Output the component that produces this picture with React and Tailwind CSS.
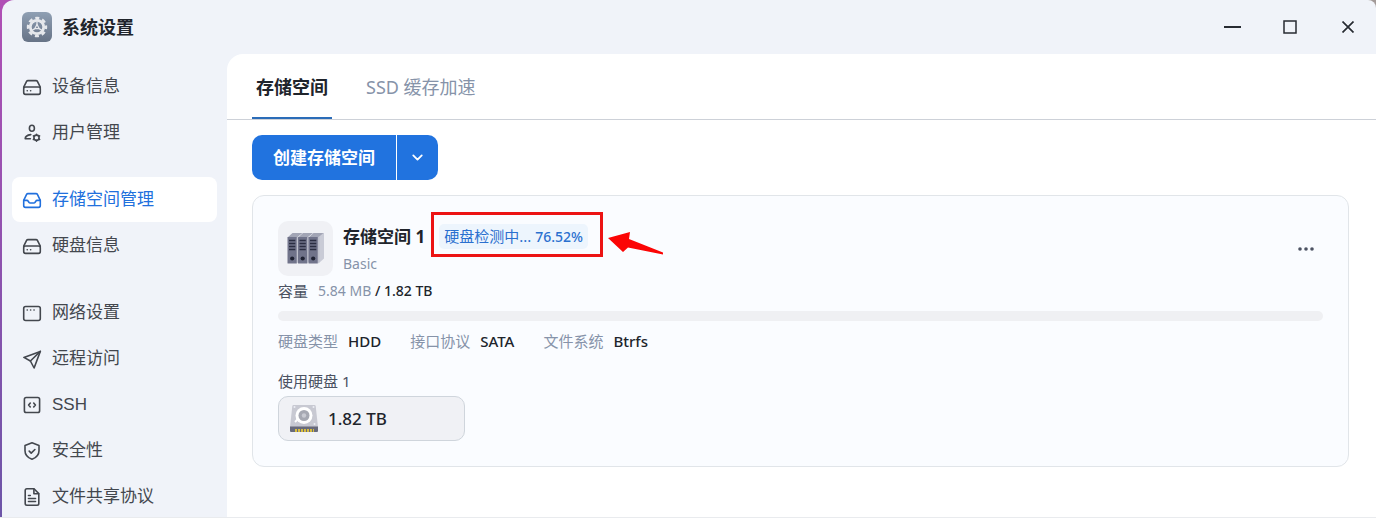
import React from 'react';
import { ChevronDown } from 'lucide-react';

const iconProps = {
  width: 20,
  height: 20,
  viewBox: '0 0 20 20',
  fill: 'none',
  stroke: 'currentColor',
  strokeWidth: 1.6,
  strokeLinecap: 'round',
  strokeLinejoin: 'round',
  'aria-hidden': true,
};

const DriveIcon = () => (
  <svg {...iconProps}>
    <path d="M1.7 10.2 4.6 4.4Q5 3.6 6 3.6h8q1 0 1.4.8l2.9 5.8" />
    <rect x="1.7" y="10" width="16.6" height="7.4" rx="1.8" />
    <path d="M5.2 13.8h.1M8.6 13.8h.1" />
  </svg>
);

const StorageIcon = () => (
  <svg {...iconProps}>
    <path d="M1.7 10.4 4.6 4.4Q5 3.6 6 3.6h8q1 0 1.4.8l2.9 6v5.2q0 1.8-1.8 1.8h-13q-1.8 0-1.8-1.8z" />
    <path d="M1.7 10.4h3.2q.9 0 1.3.8l.7 1.1q.4.7 1.3.7h3.6q.9 0 1.3-.7l.7-1.1q.4-.8 1.3-.8h3.2" />
  </svg>
);

const UserIcon = () => (
  <svg {...iconProps}>
    <ellipse cx="9.9" cy="5.2" rx="2.5" ry="3" />
    <path d="M8.8 11.6c-3.2.4-5.6 2-5.6 4.2h5.2" />
    <circle cx="14.5" cy="14.7" r="2.6" />
    <path d="M14.5 11.2v.8M14.5 17.4v.8M11.4 12.9l.8.5M16.8 16l.8.5M11.4 16.5l.8-.5M16.8 13.4l.8-.5" />
  </svg>
);

const NetworkIcon = () => (
  <svg {...iconProps}>
    <rect x="1.7" y="3.5" width="16.6" height="14" rx="2" />
    <path d="M5.2 7h.1M8.6 7h.1M12 7h.1" />
  </svg>
);

const RemoteIcon = () => (
  <svg {...iconProps}>
    <path d="M18.3 2.4 1.9 8.4l6.5 3.6 3.7 7z" />
    <path d="M18.3 2.4 8.4 12" />
  </svg>
);

const SshIcon = () => (
  <svg {...iconProps}>
    <rect x="2.4" y="2.5" width="15.2" height="15" rx="1.8" />
    <path d="M8.3 8 6.6 10l1.7 2M11.7 8l1.7 2-1.7 2" />
  </svg>
);

const ShieldIcon = () => (
  <svg {...iconProps}>
    <path d="M10 1.8 17 4.4v5.3c0 4.3-2.7 6.9-7 8.6-4.3-1.7-7-4.3-7-8.6V4.4z" />
    <path d="m7.2 10.1 2 2 3.7-3.6" />
  </svg>
);

const FileIcon = () => (
  <svg {...iconProps}>
    <path d="M12 1.8H4.9Q3.2 1.8 3.2 3.5v13q0 1.7 1.7 1.7h10.2q1.7 0 1.7-1.7V6.6z" />
    <path d="M11.9 2v4.7h4.7M6.5 8.5h1.8M6.5 11.5h7M6.5 14.5h7" />
  </svg>
);

const AppIcon = () => (
  <svg width="30" height="30" viewBox="0 0 30 30" aria-hidden="true">
    <defs>
      <linearGradient id="app-bg" x1="0" y1="0" x2="0" y2="1">
        <stop offset="0" stopColor="#8f9fb3" />
        <stop offset="1" stopColor="#677386" />
      </linearGradient>
    </defs>
    <rect width="30" height="30" rx="6" fill="url(#app-bg)" />
    <g stroke="#e6e8ec" fill="none">
      <circle cx="15" cy="15" r="6.7" strokeWidth="2.8" />
      <circle cx="15" cy="15" r="8.9" strokeWidth="2.6" strokeDasharray="4 2.99" strokeDashoffset="2" />
      <path d="M15 9.5V13M10.2 18.2l2.6-1.6M19.8 18.2l-2.6-1.6" strokeWidth="1.3" />
      <path d="m15 12.5 2.3 4.2h-4.6z" strokeWidth="1.3" strokeLinejoin="round" />
    </g>
  </svg>
);

const PoolIcon = () => (
  <svg width="38" height="34" viewBox="0 0 38 34" aria-hidden="true">
    <path d="M30 5.5 34 1h3v25.5l-5.5 5z" fill="#c9cbd6" />
    {[0.5, 11, 21.5].map((x) => (
      <g key={x} transform={`translate(${x} 0)`}>
        <path d="M0 5.5 5 1h10l-5.5 4.5z" fill="#a2a5b5" />
        <path d="M9.3 5.5 11 4v26l-1.7 1.5z" fill="#bfc1cd" />
        <rect y="5" width="9.3" height="26.5" rx=".5" fill="#70738a" />
        <path d="M1.5 8.5h6.3M1.5 11.5h6.3M1.5 14.5h6.3M1.5 17.5h6.3" stroke="#2b2e42" strokeWidth="1.3" />
        <circle cx="4.7" cy="26.5" r="2.1" fill="#1f2233" />
      </g>
    ))}
  </svg>
);

const DiskIcon = () => (
  <svg width="28" height="28" viewBox="0 0 28 28" aria-hidden="true">
    <path d="M3.5 0h21q1 0 1.2 1L28 22H0L2.3 1Q2.5 0 3.5 0z" fill="#c8c9d2" />
    <path d="M0 21.5h28V26q0 1-1 1H1q-1 0-1-1z" fill="#686a7b" />
    <path d="M5 25.5h19" stroke="#d8bd3e" strokeWidth="3" strokeDasharray="2 1" />
    <circle cx="14" cy="10.5" r="8.5" fill="#fff" />
    <circle cx="14" cy="10.5" r="5.5" fill="#a6a8b2" />
    <circle cx="14" cy="10.5" r="2.2" fill="#c9cad2" />
    <path d="m5 17 3-3" stroke="#fff" strokeWidth="2" />
    <g fill="#eceef3">
      <circle cx="4.5" cy="2" r="1" />
      <circle cx="23.5" cy="2" r="1" />
      <circle cx="24.5" cy="19" r="1" />
    </g>
  </svg>
);

const groups = [
  [
    { label: '设备信息', Icon: DriveIcon },
    { label: '用户管理', Icon: UserIcon },
  ],
  [
    { label: '存储空间管理', Icon: StorageIcon, active: true },
    { label: '硬盘信息', Icon: DriveIcon },
  ],
  [
    { label: '网络设置', Icon: NetworkIcon },
    { label: '远程访问', Icon: RemoteIcon },
    { label: 'SSH', Icon: SshIcon },
    { label: '安全性', Icon: ShieldIcon },
    { label: '文件共享协议', Icon: FileIcon },
  ],
];

const specs = [
  ['硬盘类型', 'HDD'],
  ['接口协议', 'SATA'],
  ['文件系统', 'Btrfs'],
];

const TitleBar = () => (
  <header className="flex h-[54px] shrink-0 items-center justify-between pl-5 pr-4">
    <div className="flex items-center gap-[10px]">
      <AppIcon />
      <h1 className="text-[18px] font-bold text-[#20242b]">系统设置</h1>
    </div>
    <div className="flex items-center gap-[34px] text-[#272b32]">
      <button type="button" aria-label="最小化" className="grid size-6 place-items-center">
        <svg width="18" height="18" viewBox="0 0 18 18" stroke="currentColor" strokeWidth="2"><path d="M1 9h17" /></svg>
      </button>
      <button type="button" aria-label="最大化" className="grid size-6 place-items-center">
        <svg width="14" height="14" viewBox="0 0 14 14" fill="none" stroke="currentColor" strokeWidth="1.5"><rect x="1" y="1" width="12" height="12" /></svg>
      </button>
      <button type="button" aria-label="关闭" className="grid size-6 place-items-center">
        <svg width="12" height="12" viewBox="0 0 12 12" stroke="currentColor" strokeWidth="1.7"><path d="m.5.5 11 11M11.5.5l-11 11" /></svg>
      </button>
    </div>
  </header>
);

const Sidebar = () => (
  <nav className="flex w-[225px] shrink-0 flex-col gap-[22px] overflow-hidden px-[10px] pt-[10px] font-['Liberation_Sans','Noto_Sans_CJK_SC',sans-serif]">
    {groups.map((items) => (
      <ul key={items[0].label} className="flex flex-col gap-px">
        {items.map(({ label, Icon, active }) => (
          <li key={label}>
            <a
              href="#"
              aria-current={active ? 'page' : undefined}
              className={`flex h-[45px] items-center gap-[10px] rounded-lg px-[10px] text-[17px] ${active ? 'bg-white text-[#2170dd]' : 'text-[#43474e]'}`}
            >
              <Icon />
              <span>{label}</span>
            </a>
          </li>
        ))}
      </ul>
    ))}
  </nav>
);

const PoolCard = () => (
  <section className="mt-[15px] rounded-xl border border-[#e1e5e9] bg-[#fafcff] p-[25px]">
    <div className="flex items-center justify-between">
      <div className="flex gap-[10px]">
        <div className="grid size-[55px] place-items-center rounded-[10px] bg-[#f0f1f5]">
          <PoolIcon />
        </div>
        <div className="flex flex-col">
          <div className="flex h-[31px] items-center gap-[14px]">
            <h2 className="text-[17px] font-bold text-[#20242b]">存储空间 1</h2>
            <div className="relative">
              <span className="block h-[25px] rounded-[5px] bg-[#edf5fd] px-[5px] text-[15px] leading-[25px] text-[#2a70cf]">
                硬盘检测中... <span className="text-[14px] font-medium">76.52%</span>
              </span>
              {/* callout around the progress badge */}
              <span className="absolute -bottom-2 -left-2 -right-[15px] -top-3 border-[3px] border-[#ec1313]" />
              <svg className="absolute left-full top-2 ml-5" width="56" height="26" viewBox="0 0 56 26" aria-hidden="true">
                <path d="M0 6 22 0l-1 7 34 13.5v2L20 15.5 15 20z" fill="#fb0505" />
              </svg>
            </div>
          </div>
          <p className="text-[14px] leading-6 text-[#8693a9]">Basic</p>
        </div>
      </div>
      <button type="button" aria-label="更多" className="grid h-6 w-[34px] place-items-center text-[#4c5262]">
        <svg width="16" height="4" viewBox="0 0 16 4" fill="currentColor">
          <circle cx="2" cy="2" r="1.8" />
          <circle cx="8" cy="2" r="1.8" />
          <circle cx="14" cy="2" r="1.8" />
        </svg>
      </button>
    </div>
    <p className="mt-1 flex gap-[10px] text-[15px] leading-[22px] text-[#4b5262]">
      容量
      <span className="text-[14px] text-[#8693a9]">
        5.84 MB <span className="font-medium text-[#20242b]">/ 1.82 TB</span>
      </span>
    </p>
    <div className="mt-[9px] h-[10px] rounded-[5px] bg-[#eff0f3]" />
    <dl className="mt-[9px] flex gap-[29px] text-[15px] leading-[22px]">
      {specs.map(([name, value]) => (
        <div key={name} className="flex gap-[10px]">
          <dt className="text-[#8693a9]">{name}</dt>
          <dd className="font-medium text-[#20242b]">{value}</dd>
        </div>
      ))}
    </dl>
    <h3 className="mt-[18px] text-[15px] leading-[22px] text-[#4b5262]">使用硬盘 1</h3>
    <div className="mt-1 flex h-[45px] w-[187px] items-center gap-[10px] rounded-[10px] border border-[#cfd5dc] bg-[#f0f1f5] px-[11px]">
      <DiskIcon />
      <span className="text-[17px] font-medium text-[#20242b]">1.82 TB</span>
    </div>
  </section>
);

const App = () => {
  return (
    <div className="h-screen border-b border-[#e9ebee] bg-[linear-gradient(90deg,transparent_50%,#a39a98_50%),linear-gradient(180deg,#b04fb5,#6d55a8)] pl-[2px] font-['Noto_Sans','Noto_Sans_CJK_SC',sans-serif]">
      <div className="flex h-full flex-col overflow-hidden rounded-tl-xl rounded-tr-lg bg-[#f0f3f9]">
        <TitleBar />
        <div className="flex min-h-0 flex-1">
          <Sidebar />
          <main className="min-w-0 flex-1 overflow-hidden rounded-tl-2xl bg-white">
            <div role="tablist" className="flex h-[66px] gap-[30px] border-b border-[#cdd1d8] pl-[25px] text-[18px]">
              <button type="button" role="tab" aria-selected="true" className="border-b-2 border-[#2b6cb8] px-1 pt-1 font-bold text-[#20242b]">
                存储空间
              </button>
              <button type="button" role="tab" aria-selected="false" className="border-b-2 border-transparent px-1 pt-1 text-[#8693a9]">
                SSD 缓存加速
              </button>
            </div>
            <div className="pl-[25px] pr-[27px] pt-[15px]">
              <div className="flex h-[45px] w-fit gap-px overflow-hidden rounded-[10px] text-white">
                <button type="button" className="bg-[#2173df] px-[21px] pt-px text-[17px] font-bold">创建存储空间</button>
                <button type="button" aria-label="更多选项" className="grid w-[41px] place-items-center bg-[#2173df]">
                  <ChevronDown size={17} strokeWidth={2.5} />
                </button>
              </div>
              <PoolCard />
            </div>
          </main>
        </div>
      </div>
    </div>
  );
};

export default App;
